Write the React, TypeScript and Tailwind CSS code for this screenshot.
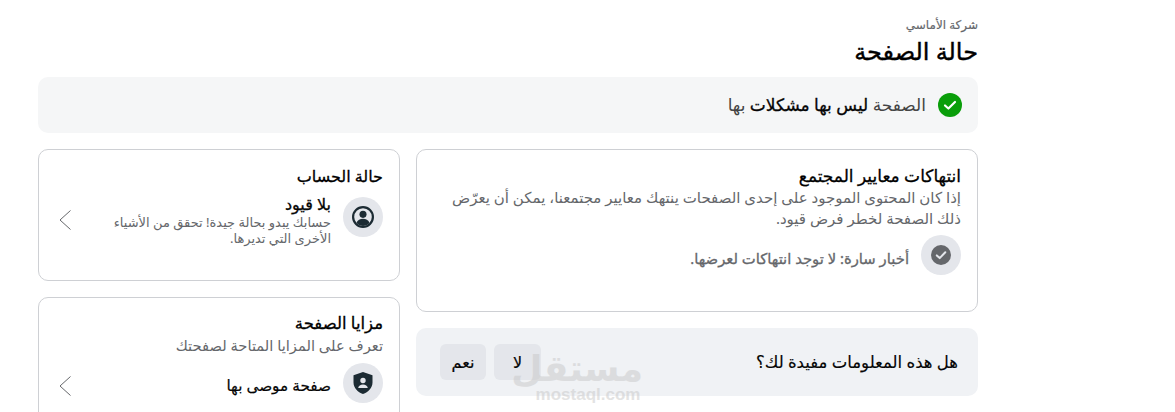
import React from "react";

const Chevron = () => (
  <svg width="12" height="20" viewBox="0 0 12 20" fill="none" stroke="#65676b" strokeWidth="1" className="shrink-0">
    <path d="M11.500 0.500 L1 10 L11.500 19.500" />
  </svg>
);

const IconCircle = ({ children }: { children: React.ReactNode }) => (
  <div className="h-10 w-10 shrink-0 rounded-full bg-[#e4e6eb] flex items-center justify-center">{children}</div>
);

export default function App() {
  return (
    <div
      dir="rtl"
      className="relative h-[412px] w-[1175px] overflow-hidden bg-white text-[#050505]"
      style={{ fontFamily: '"Noto Sans", "DejaVu Sans", sans-serif' }}
    >
      <div className="mr-[197px] w-[940px] pt-[17px]">
        <div className="text-[12px] leading-[16px] text-[#65676b] [-webkit-text-stroke:0.15px]">شركة الأماسي</div>
        <h1 className="mt-[2px] text-[24px] leading-[32px] text-black [-webkit-text-stroke:0.4px]">حالة الصفحة</h1>
        <div className="mt-[10px] flex h-[56px] items-center gap-[12px] rounded-[10px] bg-[#f5f6f7] px-[16px]">
          <svg width="24" height="24" viewBox="0 0 24 24" className="shrink-0">
            <circle cx="12" cy="12" r="12" fill="#0a9e0a" />
            <path d="M7 12.500l3.400 3L17 9" fill="none" stroke="#fff" strokeWidth="2.200" strokeLinecap="round" strokeLinejoin="round" />
          </svg>
          <div className="text-[17px] leading-[20px]">
            <span className="text-[#444]">الصفحة </span>
            <span className="[-webkit-text-stroke:0.3px]">ليس بها مشكلات </span>
            <span className="text-[#444]">بها</span>
          </div>
        </div>

        <div className="mt-[16px] flex items-start gap-[16px]">
          <div className="w-[562px] shrink-0">
            <section className="h-[163px] rounded-[10px] border border-[#ced0d4] px-[16px] pt-[14px]">
              <h2 className="text-[17px] leading-[23px] text-black [-webkit-text-stroke:0.3px]">انتهاكات معايير المجتمع</h2>
              <p className="text-[15px] leading-[21px] text-[#65676b]">
                إذا كان المحتوى الموجود على إحدى الصفحات ينتهك معايير مجتمعنا، يمكن أن يعرّض ذلك الصفحة لخطر فرض قيود.
              </p>
              <div className="mt-[6px] flex items-center gap-[12px]">
                <IconCircle>
                  <svg width="20" height="20" viewBox="0 0 20 20">
                    <circle cx="10" cy="10" r="10" fill="#65676b" />
                    <path d="M5.800 10.400l2.900 2.700 5.600-5.800" fill="none" stroke="#e4e6eb" strokeWidth="2" strokeLinecap="round" strokeLinejoin="round" />
                  </svg>
                </IconCircle>
                <div className="mt-[6px] text-[14.8px] leading-[20px] text-[#65676b] [-webkit-text-stroke:0.3px]">أخبار سارة: لا توجد انتهاكات لعرضها.</div>
              </div>
            </section>
            <section className="mt-[16px] flex h-[68px] items-center justify-between rounded-[10px] bg-[#f0f2f5] pl-[24px] pr-[20px]">
              <div className="text-[16.5px] leading-[20px] text-[#050505] [-webkit-text-stroke:0.15px]">هل هذه المعلومات مفيدة لك؟</div>
              <div className="flex gap-[8px]">
                <button className="h-[36px] w-[47px] rounded-[6px] bg-[#e4e6eb] text-[16px] [-webkit-text-stroke:0.2px]">لا</button>
                <button className="h-[36px] w-[46px] rounded-[6px] bg-[#e4e6eb] text-[16px] [-webkit-text-stroke:0.2px]">نعم</button>
              </div>
            </section>
          </div>

          <div className="w-[362px] shrink-0">
            <section className="h-[132px] rounded-[10px] border border-[#ced0d4] px-[16px] pt-[14px]">
              <h2 className="text-[16px] leading-[24px] text-black [-webkit-text-stroke:0.3px]">حالة الحساب</h2>
              <div className="mt-[6px] flex items-start">
                <div className="mt-[3px]">
                  <IconCircle>
                    <svg width="22" height="22" viewBox="0 0 20 20">
                      <circle cx="10" cy="10" r="9" fill="none" stroke="#1c2b33" strokeWidth="2" />
                      <circle cx="10" cy="7.600" r="3.200" fill="#1c2b33" />
                      <path d="M4 15.500c1-3 3.400-4 6-4s5 1 6 4a8 8 0 0 1-12 0z" fill="#1c2b33" />
                    </svg>
                  </IconCircle>
                </div>
                <div className="mr-[12px] flex-1">
                  <div className="text-[16px] leading-[20px] [-webkit-text-stroke:0.3px]">بلا قيود</div>
                  <div className="w-[235px] text-[13px] leading-[16px] text-[#65676b]">حسابك يبدو بحالة جيدة! تحقق من الأشياء الأخرى التي تديرها.</div>
                </div>
                <div className="ml-[4px] mt-[16px]"><Chevron /></div>
              </div>
            </section>
            <section className="mt-[16px] h-[140px] rounded-[10px] border border-[#ced0d4] px-[16px] pt-[13px]">
              <h2 className="text-[16.5px] leading-[24px] text-black [-webkit-text-stroke:0.3px]">مزايا الصفحة</h2>
              <div className="text-[14.7px] leading-[20px] text-[#65676b]">تعرف على المزايا المتاحة لصفحتك</div>
              <div className="mt-[8px] flex items-center">
                <IconCircle>
                  <svg width="22" height="22" viewBox="0 0 22 22">
                    <path fillRule="evenodd" fill="#1c2b33" d="M11 0l9.500 3.200v7.300c0 5.400-4.200 9.600-9.500 11.500C5.700 20.100 1.500 15.900 1.500 10.500V3.200zM11 5.800a2.700 2.700 0 1 0 0 5.400 2.700 2.700 0 0 0 0-5.400zM6.200 16h9.600c-.3-2.300-2.300-3.600-4.800-3.600S6.500 13.700 6.200 16z" />
                  </svg>
                </IconCircle>
                <div className="mr-[12px] mt-[4px] flex-1 text-[15.3px] leading-[20px] [-webkit-text-stroke:0.2px]">صفحة موصى بها</div>
                <div className="ml-[4px] mt-[6px]"><Chevron /></div>
              </div>
            </section>
          </div>
        </div>
      </div>

      <div dir="ltr" className="pointer-events-none absolute left-[533px] top-[351px] w-[110px] text-center text-[#c8c8c8] opacity-50">
        <div dir="rtl" className="text-[36px] font-bold leading-[34px]">مستقل</div>
        <div className="mt-[2px] text-[17px] font-bold leading-[16px]" style={{ fontFamily: '"Liberation Sans", sans-serif' }}>mostaql.com</div>
      </div>
    </div>
  );
}
